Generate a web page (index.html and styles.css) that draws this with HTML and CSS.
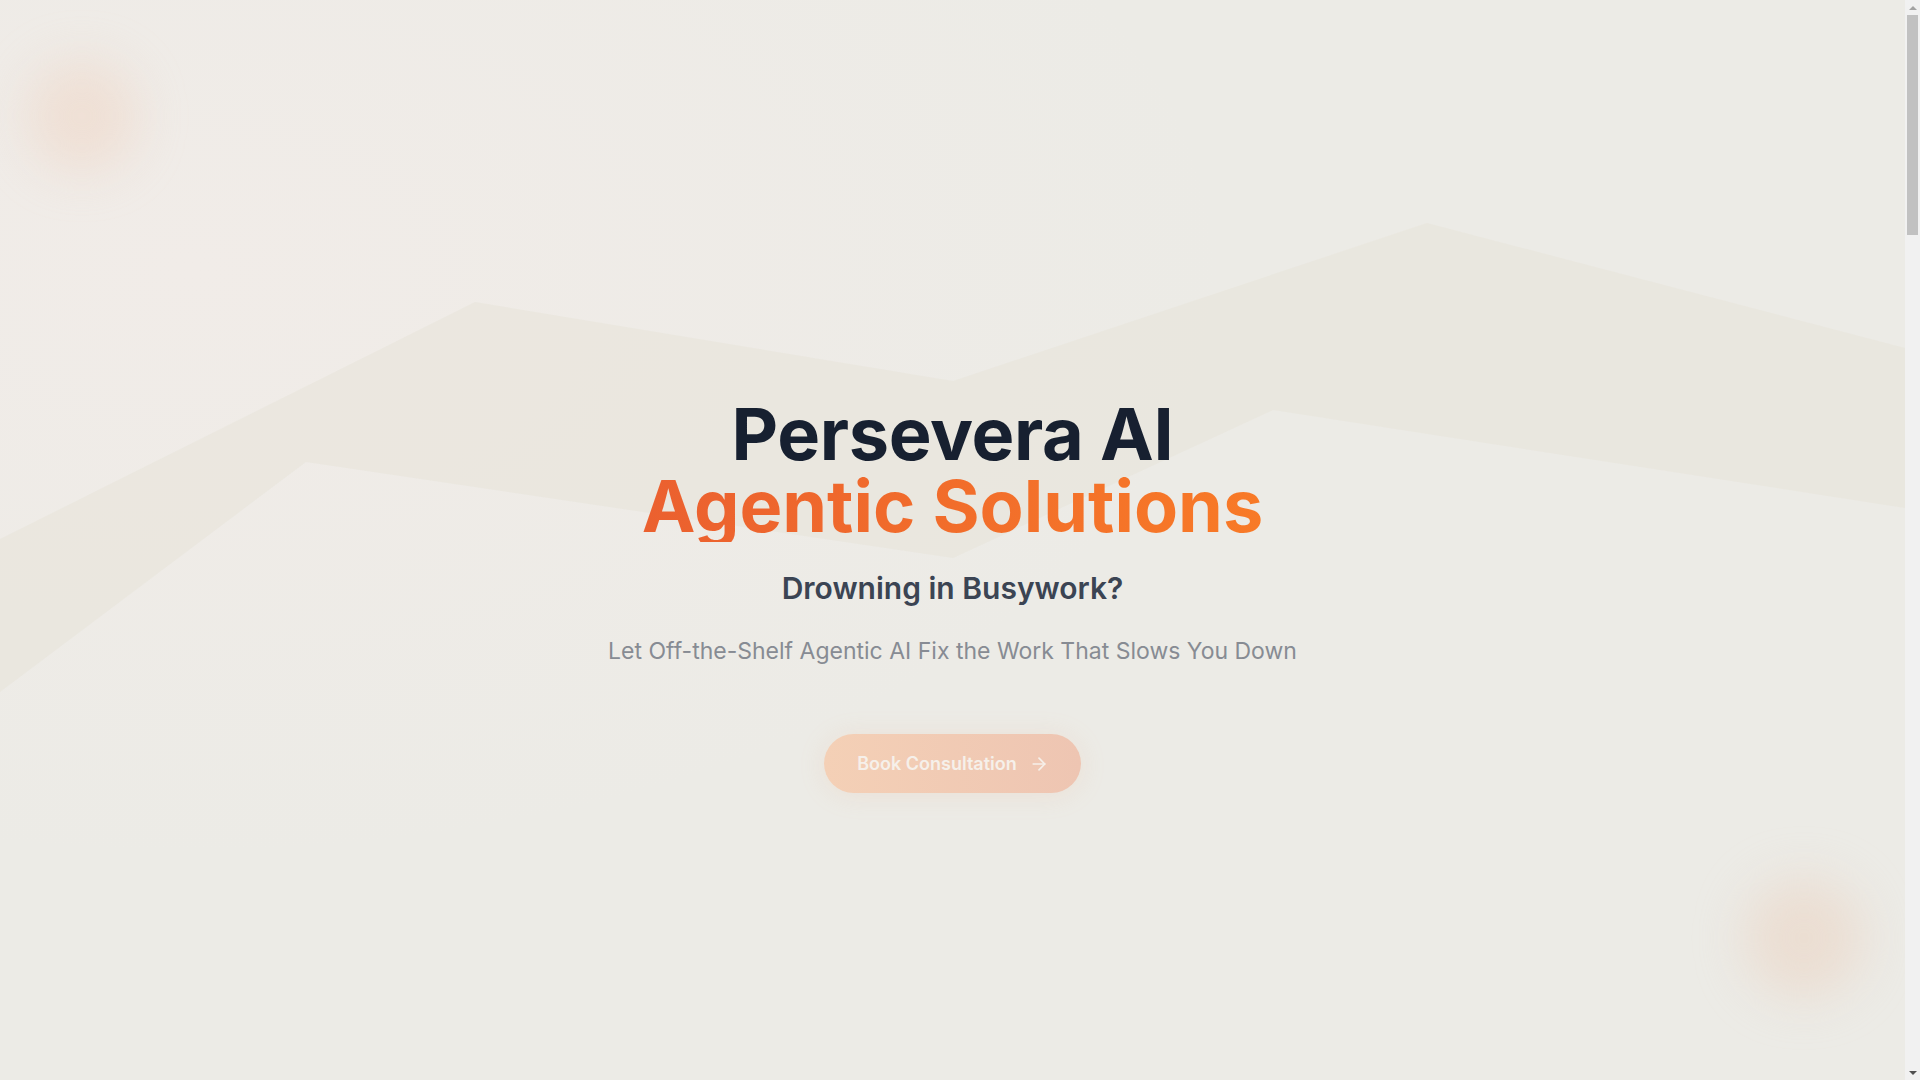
FILE: index.html
```html
<!DOCTYPE html>
<html lang="en">
<head>
<meta charset="utf-8">
<title>Persevera AI — Agentic Solutions</title>
<link rel="stylesheet" href="styles.css">
</head>
<body>
<main class="page">
  <section class="hero">
    <svg class="hero-bg" viewBox="0 0 1905 1080" preserveAspectRatio="none" aria-hidden="true">
      <defs>
        <radialGradient id="glow" cx="0.1" cy="0.25" r="0.55">
          <stop offset="0" stop-color="#f1ece8" stop-opacity="1"/>
          <stop offset="1" stop-color="#f1ece8" stop-opacity="0"/>
        </radialGradient>
      </defs>
      <rect x="0" y="0" width="1905" height="1080" fill="url(#glow)"/>
      <polygon class="band" points="0,539 475,302 953,381 1427,223 1905,348 1905,508 1273,410 953,558 306,462 0,692"/>
    </svg>
    <div class="blob blob-tl"></div>
    <div class="blob blob-br"></div>

    <div class="hero-content">
      <h1 class="title">
        <span class="title-main">Persevera AI</span>
        <span class="title-accent">Agentic Solutions</span>
      </h1>
      <h2 class="tagline">Drowning in Busywork?</h2>
      <p class="lead">Let Off-the-Shelf Agentic AI Fix the Work That Slows You Down</p>
      <a class="cta" href="#book">
        <span>Book Consultation</span>
        <svg class="cta-icon" viewBox="0 0 24 24" fill="none" stroke="currentColor" stroke-width="2" stroke-linecap="round" stroke-linejoin="round" aria-hidden="true">
          <path d="M5 12h14"/>
          <path d="m12 5 7 7-7 7"/>
        </svg>
      </a>
    </div>
  </section>
  <section class="below" id="book"></section>
</main>
<div class="scrollbar" aria-hidden="true">
  <div class="sb-btn"><span class="sb-up"></span></div>
  <div class="sb-track"><div class="sb-thumb"></div></div>
  <div class="sb-btn"><span class="sb-down"></span></div>
</div>
</body>
</html>
```

FILE: styles.css
```css
* { box-sizing: border-box; }

html, body {
  margin: 0;
  padding: 0;
}

body {
  background: #ecebe6;
  font-family: Inter, "Noto Sans", "Liberation Sans", sans-serif;
  color: #172030;
}

.page {
  display: flex;
  flex-direction: column;
  margin-right: 15px;
}

.hero {
  position: relative;
  height: 1080px;
  overflow: hidden;
  background: #ecebe6;
}

.hero-bg {
  position: absolute;
  inset: 0;
  width: 100%;
  height: 100%;
}

.band {
  fill: #e8e4da;
  opacity: 0.6;
}

.blob {
  position: absolute;
  border-radius: 50%;
  filter: blur(24px);
}

.blob-tl {
  left: 26px;
  top: 60px;
  width: 112px;
  height: 112px;
  background: rgba(238, 205, 184, 0.38);
}

.blob-br {
  left: 1744px;
  top: 878px;
  width: 120px;
  height: 120px;
  background: rgba(236, 210, 192, 0.5);
}

.hero-content {
  position: relative;
  display: flex;
  flex-direction: column;
  align-items: center;
  padding-top: 398px;
  text-align: center;
}

.title {
  margin: 0;
  display: flex;
  flex-direction: column;
  align-items: center;
  font-size: 72px;
  line-height: 72px;
  font-weight: 700;
  letter-spacing: -0.005em;
}

.title-main {
  color: #172030;
}

.title-accent {
  letter-spacing: 0;
  background: linear-gradient(90deg, #eb602f 0%, #f87a27 100%);
  -webkit-background-clip: text;
  background-clip: text;
  color: transparent;
}

.tagline {
  margin: 28px 0 0;
  font-size: 30px;
  line-height: 36px;
  font-weight: 600;
  color: #3b4453;
}

.lead {
  margin: 29px 0 0;
  font-size: 23px;
  line-height: 32px;
  font-weight: 400;
  color: #878b93;
}

.cta {
  margin-top: 67px;
  display: inline-flex;
  align-items: center;
  gap: 12px;
  height: 59px;
  padding: 0 32px 0 33px;
  border-radius: 999px;
  background: linear-gradient(90deg, #f4d0b6 0%, #eec5b2 100%);
  box-shadow: 0 2px 26px rgba(238, 175, 140, 0.18);
  color: #f6f0ea;
  font-size: 18px;
  font-weight: 600;
  text-decoration: none;
}

.cta-icon {
  width: 20px;
  height: 20px;
}

.below {
  height: 4070px;
  background: #ecebe6;
}

/* decorative browser scrollbar */
.scrollbar {
  position: fixed;
  top: 0;
  right: 0;
  width: 15px;
  height: 100vh;
  background: #f1f1f1;
  display: flex;
  flex-direction: column;
}

.sb-btn {
  height: 15px;
  display: flex;
  align-items: center;
  justify-content: center;
}

.sb-up,
.sb-down {
  width: 0;
  height: 0;
  border-left: 4px solid transparent;
  border-right: 4px solid transparent;
}

.sb-up {
  border-bottom: 4px solid #a3a3a3;
}

.sb-down {
  border-top: 4px solid #505050;
}

.sb-track {
  flex: 1;
  padding: 0 2px;
}

.sb-thumb {
  height: 220px;
  background: #c1c1c1;
}
```
